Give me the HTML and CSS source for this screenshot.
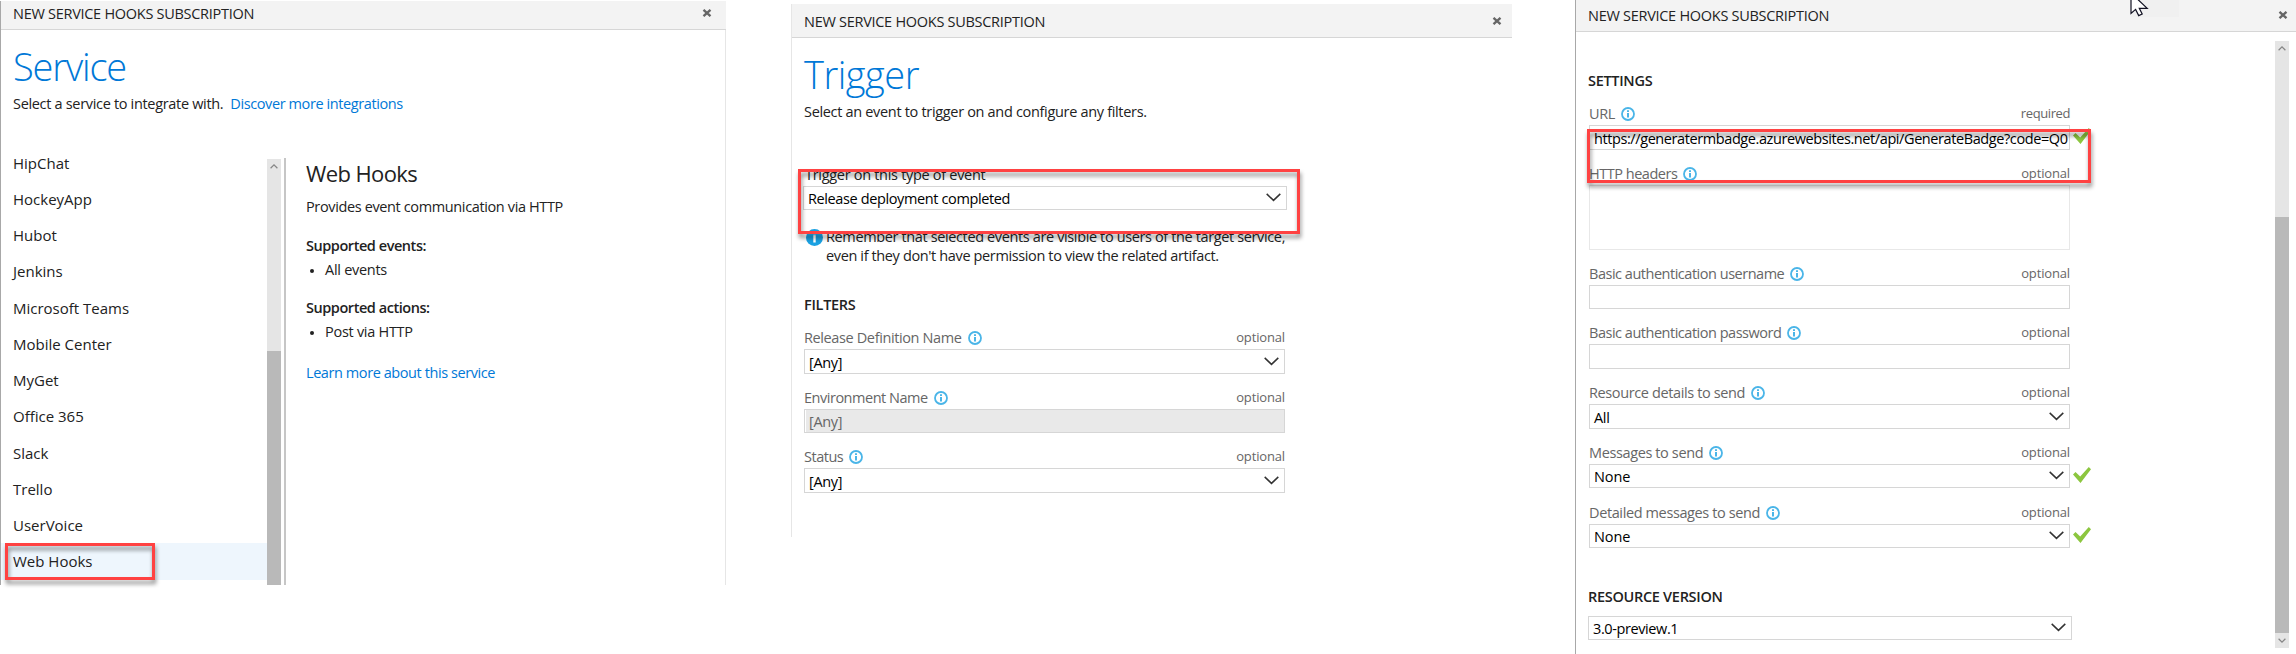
FILE: index.html
```
<!DOCTYPE html>
<html lang="en">
<head>
<meta charset="utf-8">
<title>New service hooks subscription</title>
<link rel="stylesheet" href="styles.css">
</head>
<body>
<svg class="defs" width="0" height="0">
  <symbol id="info" viewBox="0 0 14 14"><circle cx="7" cy="7" r="6" fill="none" stroke="#4ab5e8" stroke-width="1.8"/><path d="M6 3.2h2v1.700H6zM6 6h2v4.600H6z" fill="#4ab5e8"/></symbol>
  <symbol id="chev" viewBox="0 0 15 9"><path d="M.7 .9 7.500 7.400 14.300 .9" fill="none" stroke="#333" stroke-width="1.500"/></symbol>
  <symbol id="check" viewBox="0 0 18 16"><path d="M0 7.600 2.500 5 7.200 9.600 15.800 0 18 2.300 7.500 16z" fill="#8cc63f"/></symbol>
  <symbol id="close" viewBox="0 0 10 8"><path d="M1.500 .8 8.500 7.200M8.500 .8 1.500 7.200" fill="none" stroke="#666" stroke-width="2.300"/></symbol>
  <symbol id="arrow" viewBox="0 0 8 5"><path d="M.6 4.200 4 .9 7.400 4.200" fill="none" stroke="#858585" stroke-width="1.200"/></symbol>
</svg>

<section class="panel panel-service">
  <header class="bar"><span>NEW SERVICE HOOKS SUBSCRIPTION</span><svg class="close"><use href="#close"/></svg></header>
  <h1 class="heading heading-service">Service</h1>
  <p class="lead"><span>Select a service to integrate with.</span><a class="link">Discover more integrations</a></p>
  <div class="picker">
    <div class="list">
      <div class="item">HipChat</div>
      <div class="item">HockeyApp</div>
      <div class="item">Hubot</div>
      <div class="item">Jenkins</div>
      <div class="item">Microsoft Teams</div>
      <div class="item">Mobile Center</div>
      <div class="item">MyGet</div>
      <div class="item">Office 365</div>
      <div class="item">Slack</div>
      <div class="item">Trello</div>
      <div class="item">UserVoice</div>
      <div class="item selected">Web Hooks</div>
    </div>
    <div class="scroll scroll-list"><svg class="sc-arrow"><use href="#arrow"/></svg><div class="thumb"></div></div>
    <div class="detail">
      <h2 class="d-title">Web Hooks</h2>
      <p class="d-desc">Provides event communication via HTTP</p>
      <h3 class="d-sub">Supported events:</h3>
      <p class="d-item">All events</p>
      <h3 class="d-sub">Supported actions:</h3>
      <p class="d-item">Post via HTTP</p>
      <p class="d-more"><a class="link">Learn more about this service</a></p>
    </div>
  </div>
  <div class="mark mark-service"></div>
</section>

<section class="panel panel-trigger">
  <header class="bar"><span>NEW SERVICE HOOKS SUBSCRIPTION</span><svg class="close"><use href="#close"/></svg></header>
  <h1 class="heading">Trigger</h1>
  <p class="lead"><span>Select an event to trigger on and configure any filters.</span></p>
  <div class="event-label">Trigger on this type of event</div>
  <div class="box box-event"><span>Release deployment completed</span><svg class="chev"><use href="#chev"/></svg></div>
  <div class="note">
    <svg class="note-icon" viewBox="0 0 17 17"><circle cx="8.500" cy="8.500" r="8.500" fill="#1ba1e2"/><path d="M7.300 3h2.400v2.200H7.300zM7.300 6.200h2.400v7.300H7.300z" fill="#fff"/></svg>
    <div><div>Remember that selected events are visible to users of the target service,</div><div>even if they don't have permission to view the related artifact.</div></div>
  </div>
  <h3 class="group">FILTERS</h3>
  <div class="field"><div class="label"><span>Release Definition Name</span><svg class="info"><use href="#info"/></svg><em>optional</em></div><div class="box tall"><span>[Any]</span><svg class="chev"><use href="#chev"/></svg></div></div>
  <div class="field"><div class="label"><span class="tight">Environment Name</span><svg class="info"><use href="#info"/></svg><em>optional</em></div><div class="box disabled"><span>[Any]</span></div></div>
  <div class="field"><div class="label"><span class="tight">Status</span><svg class="info"><use href="#info"/></svg><em>optional</em></div><div class="box tall"><span>[Any]</span><svg class="chev"><use href="#chev"/></svg></div></div>
  <div class="mark mark-event"></div>
</section>

<section class="panel panel-action">
  <header class="bar"><span>NEW SERVICE HOOKS SUBSCRIPTION</span><svg class="close"><use href="#close"/></svg></header>
  <div class="action-body">
    <div class="form">
      <h3 class="group">SETTINGS</h3>
      <div class="field"><div class="label"><span>URL</span><svg class="info"><use href="#info"/></svg><em class="required">required</em></div><div class="box tall"><span class="url">https://generatermbadge.azurewebsites.net/api/GenerateBadge?code=Q0</span><svg class="check"><use href="#check"/></svg></div></div>
      <div class="field"><div class="label"><span class="tight">HTTP headers</span><svg class="info"><use href="#info"/></svg><em>optional</em></div><div class="box area"></div></div>
      <div class="field"><div class="label"><span class="tight">Basic authentication username</span><svg class="info"><use href="#info"/></svg><em>optional</em></div><div class="box"></div></div>
      <div class="field"><div class="label"><span class="tight">Basic authentication password</span><svg class="info"><use href="#info"/></svg><em>optional</em></div><div class="box tall"></div></div>
      <div class="field"><div class="label"><span>Resource details to send</span><svg class="info"><use href="#info"/></svg><em>optional</em></div><div class="box tall"><span>All</span><svg class="chev"><use href="#chev"/></svg></div></div>
      <div class="field field-messages"><div class="label"><span>Messages to send</span><svg class="info"><use href="#info"/></svg><em>optional</em></div><div class="box"><span class="loose">None</span><svg class="chev"><use href="#chev"/></svg><svg class="check"><use href="#check"/></svg></div></div>
      <div class="field"><div class="label"><span>Detailed messages to send</span><svg class="info"><use href="#info"/></svg><em>optional</em></div><div class="box"><span class="loose">None</span><svg class="chev"><use href="#chev"/></svg><svg class="check"><use href="#check"/></svg></div></div>
      <h3 class="group group-version">RESOURCE VERSION</h3>
      <div class="box box-version"><span>3.0-preview.1</span><svg class="chev"><use href="#chev"/></svg></div>
    </div>
    <div class="scroll scroll-form"><svg class="sc-arrow"><use href="#arrow"/></svg><div class="thumb"></div><svg class="sc-arrow sc-down"><use href="#arrow"/></svg></div>
  </div>
  <div class="mark mark-url"></div>
  <div class="ghost"></div>
  <svg class="cursor" viewBox="0 0 19 21"><path d="M1 -3V17.500L5.600 13.400 8.700 19.600 12.200 18 9.300 12.300H17.200z" fill="#fff" stroke="#112" stroke-width="1.200"/></svg>
</section>
</body>
</html>
```
FILE: styles.css
```
* { box-sizing: border-box; }
body {
  margin: 0;
  width: 2296px;
  height: 654px;
  overflow: hidden;
  display: flex;
  align-items: flex-start;
  background: #fff;
  color: #222;
  font: 14.500px/20px "Open Sans", "Noto Sans", sans-serif;
  letter-spacing: -.35px;
}
h1, h2, h3, p { margin: 0; font-weight: 400; font-size: inherit; }
em { font-style: normal; }
span, a, em { white-space: nowrap; }
.defs { position: absolute; }
.link { color: #0078d7; }

.panel { position: relative; flex: none; }
.panel-service { width: 726px; height: 584px; margin-top: 1px; border-left: 1px solid #a8a8a8; border-right: 1px solid #e6e6e6; }
.panel-trigger { width: 721px; height: 533px; margin: 4px 0 0 65px; border-left: 1px solid #e6e6e6; }
.panel-action { width: 721px; height: 654px; margin-left: 63px; border-left: 1px solid #a8a8a8; }

.bar { display: flex; justify-content: space-between; background: #f3f3f3; border-bottom: 1px solid #d6d6d6; padding-left: 12px; letter-spacing: -.28px; }
.panel-service .bar { height: 29px; padding-top: 3px; margin-right: -1px; }
.panel-trigger .bar { height: 34px; padding-top: 8px; }
.panel-action .bar { height: 32px; padding-top: 6px; }
.close { width: 10px; height: 8px; margin: 5px 14px 0 0; }
.panel-trigger .close { margin-right: 10px; }
.panel-action .close { margin-right: 8px; }

.heading { font-size: 38px; line-height: 50px; font-weight: 300; color: #0078d7; padding: 11px 0 0 12px; height: 61px; letter-spacing: -.5px; }
.heading-service { letter-spacing: -1.200px; }
.lead { display: flex; padding-left: 12px; margin-top: 3px; letter-spacing: -.32px; }
.lead .link { margin-left: 7px; letter-spacing: -.4px; }

.picker { display: flex; margin-top: 44px; height: 427px; }
.list { width: 266px; overflow: hidden; font-size: 15px; letter-spacing: 0; }
.item { height: 36.250px; line-height: 36.250px; padding-left: 12px; }
.item:first-child { margin-top: -13.400px; }
.selected { background: #eef6fd; }
.scroll { background: #e5e5e5; width: 14px; display: flex; flex-direction: column; align-items: center; }
.scroll-list { margin-top: 1px; }
.thumb { width: 14px; background: #b9b9b9; }
.scroll-list .thumb { margin-top: 182px; height: 234px; }
.sc-arrow { width: 8px; height: 5px; margin-top: 5px; flex: none; }
.detail { margin-left: 3px; border-left: 2px solid #c6c6c6; padding-left: 20px; flex: 1; }
.d-title { font-size: 22px; line-height: 30px; letter-spacing: -.6px; }
.d-desc { margin-top: 9px; letter-spacing: -.37px; }
.d-sub { font-weight: 600; margin-top: 19px; letter-spacing: -.45px; }
.d-item { display: flex; align-items: center; margin-top: 4px; padding-left: 4px; letter-spacing: -.28px; }
.d-item::before { content: ""; width: 4px; height: 4px; border-radius: 50%; background: #222; margin: 1px 11px 0 0; }
.d-item + .d-sub { margin-top: 18px; }
.d-more { margin-top: 21px; letter-spacing: -.42px; }

.event-label { padding-left: 13px; margin-top: 43px; letter-spacing: -.3px; }
.box { position: relative; display: flex; align-items: center; justify-content: space-between; height: 24px; border: 1px solid #d6d6d6; padding: 2px 5px 0 4px; color: #000; background: #fff; }
.tall { height: 25px; }
.area { height: 65px; border-color: #e8e8e8; }
.disabled { background: #e9e9e9; color: #666; box-shadow: inset 1px 0 #fff; }
.box-event { width: 484px; margin: 1px 0 0 11px; letter-spacing: -.38px; }
.chev { width: 15px; height: 9px; flex: none; margin-top: -3px; }
.note { display: flex; line-height: 19px; margin: 17px 0 0 14px; letter-spacing: -.37px; }
.note-icon { width: 17px; height: 17px; margin: 2px 3px 0 0; }
.group { font-weight: 600; padding-left: 12px; margin-top: 30px; margin-bottom: 12px; letter-spacing: -.3px; }
.field { width: 481px; margin: 0 0 13px 12px; }
.label { display: flex; align-items: center; height: 22px; color: #666; letter-spacing: -.38px; }
.tight { letter-spacing: -.48px; }
.loose { letter-spacing: -.1px; }
.info { width: 14px; height: 14px; margin-left: 6px; }
.label em { margin-left: auto; padding-bottom: 2px; font-size: 13px; letter-spacing: -.15px; }
.label .required { letter-spacing: -.4px; }
.url { letter-spacing: -.41px; }

.action-body { display: flex; justify-content: space-between; }
.form { width: 500px; }
.panel-action .group { margin-top: 39px; }
.panel-action .field { margin-left: 13px; }
.panel-action .field-messages { margin-bottom: 14px; }
.check { position: absolute; width: 18px; height: 16px; left: 483px; top: 2px; }
.panel-action .group-version { margin-bottom: 9px; }
.box-version { width: 484px; margin-left: 12px; letter-spacing: -.4px; }
.scroll-form { height: 607px; margin: 9px 7px 0 0; }
.scroll-form .thumb { margin-top: 166px; height: 416px; }
.sc-down { transform: rotate(180deg); }

.mark { position: absolute; border: 3px solid #ff4242; filter: drop-shadow(1px 4px 2px rgba(0, 0, 0, .45)); }
.mark-service { left: 4px; top: 542px; width: 150px; height: 37px; }
.mark-event { left: 6px; top: 165px; width: 502px; height: 65px; }
.mark-url { left: 11px; top: 129px; width: 504px; height: 54px; }
.ghost { position: absolute; left: 555px; top: 0; width: 48px; height: 17px; background: #f0f0f0; }
.cursor { position: absolute; left: 554px; top: -4px; width: 19px; height: 21px; }
```
